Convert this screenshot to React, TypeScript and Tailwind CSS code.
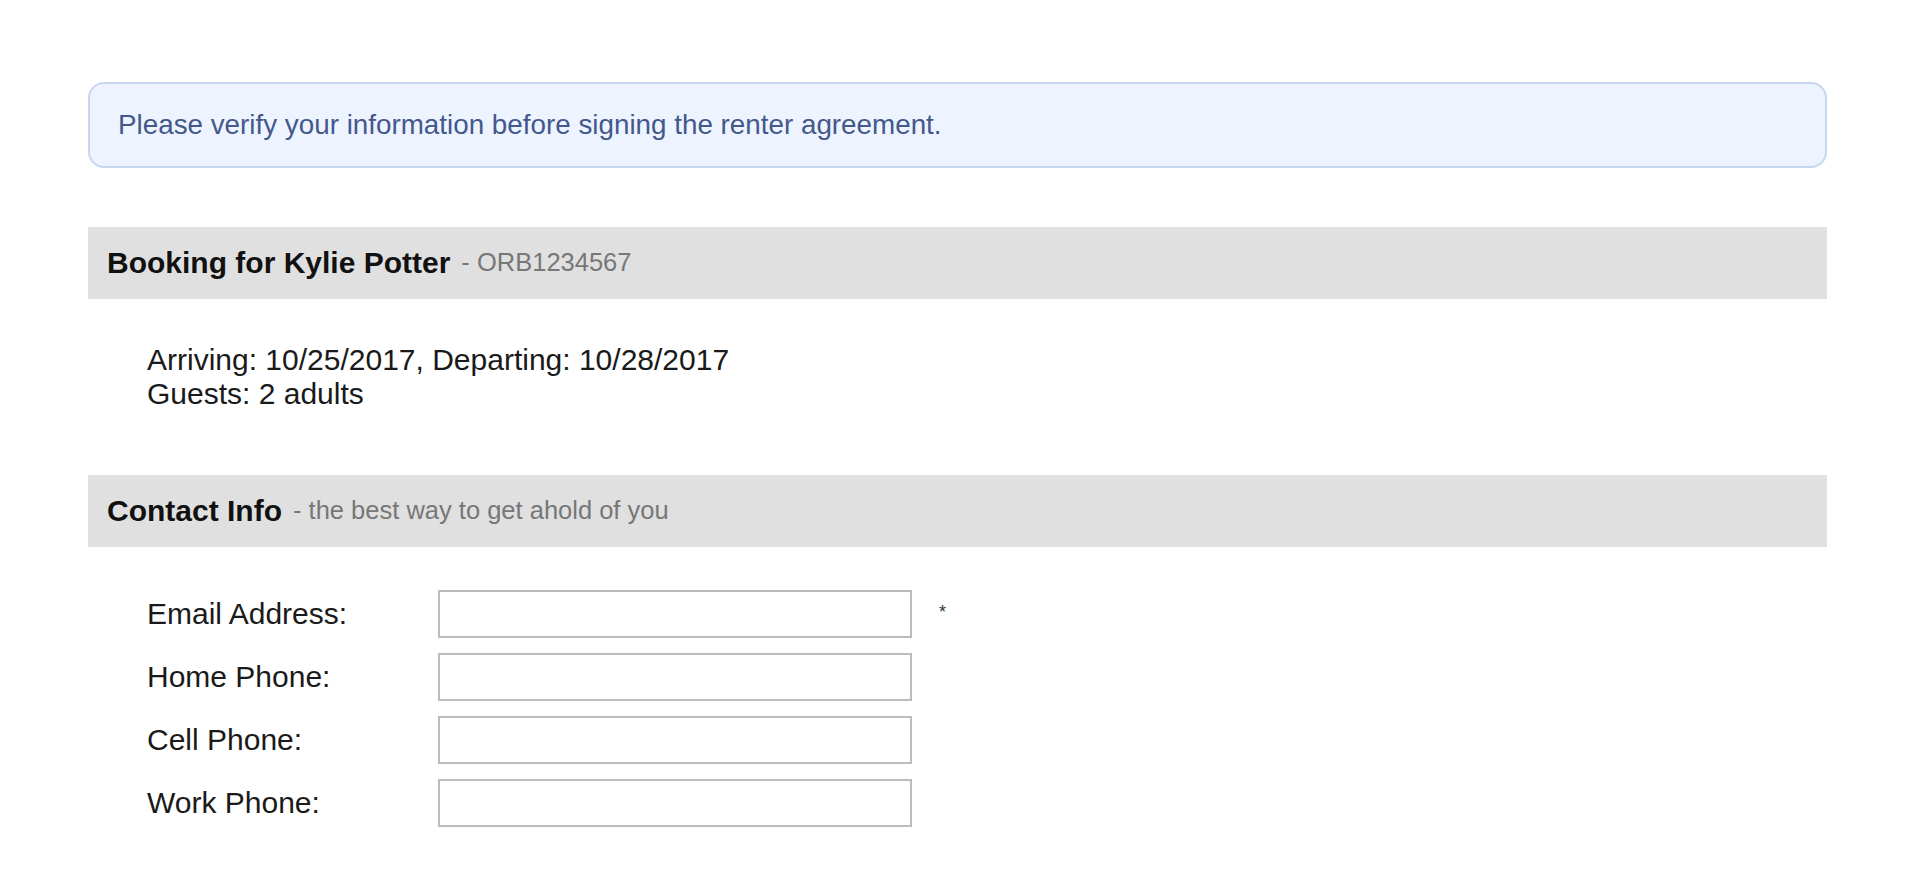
import React from 'react'

const fields = [
  { label: 'Email Address:', required: true },
  { label: 'Home Phone:', required: false },
  { label: 'Cell Phone:', required: false },
  { label: 'Work Phone:', required: false },
]

function SectionHeader({ title, note }: { title: string; note: string }) {
  return (
    <div className="flex items-center h-[72px] bg-[#e0e0e0] pl-[19px]">
      <span className="text-[30px] font-bold text-[#111] leading-none">{title}</span>
      <span className="text-[25.5px] text-[#777] leading-none ml-[11px]">- {note}</span>
    </div>
  )
}

export default function App() {
  return (
    <div
      className="min-h-[874px] bg-white pt-[82px] pl-[88px] pr-[93px]"
      style={{ fontFamily: '"Liberation Sans", Arial, sans-serif' }}
    >
      <div className="flex items-center h-[86px] rounded-[16px] border-2 border-[#c6d6f0] bg-[#edf4ff] pl-[28px]">
        <span className="text-[27.8px] text-[#44588c]">
          Please verify your information before signing the renter agreement.
        </span>
      </div>

      <div className="mt-[59px]">
        <SectionHeader title="Booking for Kylie Potter" note="ORB1234567" />
      </div>

      <div className="mt-[44px] pl-[59px] text-[30px] leading-[34px] text-[#1a1a1a]">
        <div>Arriving: 10/25/2017, Departing: 10/28/2017</div>
        <div>Guests: 2 adults</div>
      </div>

      <div className="mt-[64px]">
        <SectionHeader title="Contact Info" note="the best way to get ahold of you" />
      </div>

      <div className="mt-[43px] pl-[59px] flex flex-col gap-[15px]">
        {fields.map((f) => (
          <div key={f.label} className="flex items-center">
            <label className="w-[291px] text-[30px] text-[#1a1a1a] leading-none">{f.label}</label>
            <input
              type="text"
              className="w-[474px] h-[48px] border-2 border-[#bcbcbc] bg-white outline-none px-2 text-[26px]"
            />
            {f.required && <span className="ml-[27px] text-[18px] text-[#333] -mt-[4px]">*</span>}
          </div>
        ))}
      </div>
    </div>
  )
}
